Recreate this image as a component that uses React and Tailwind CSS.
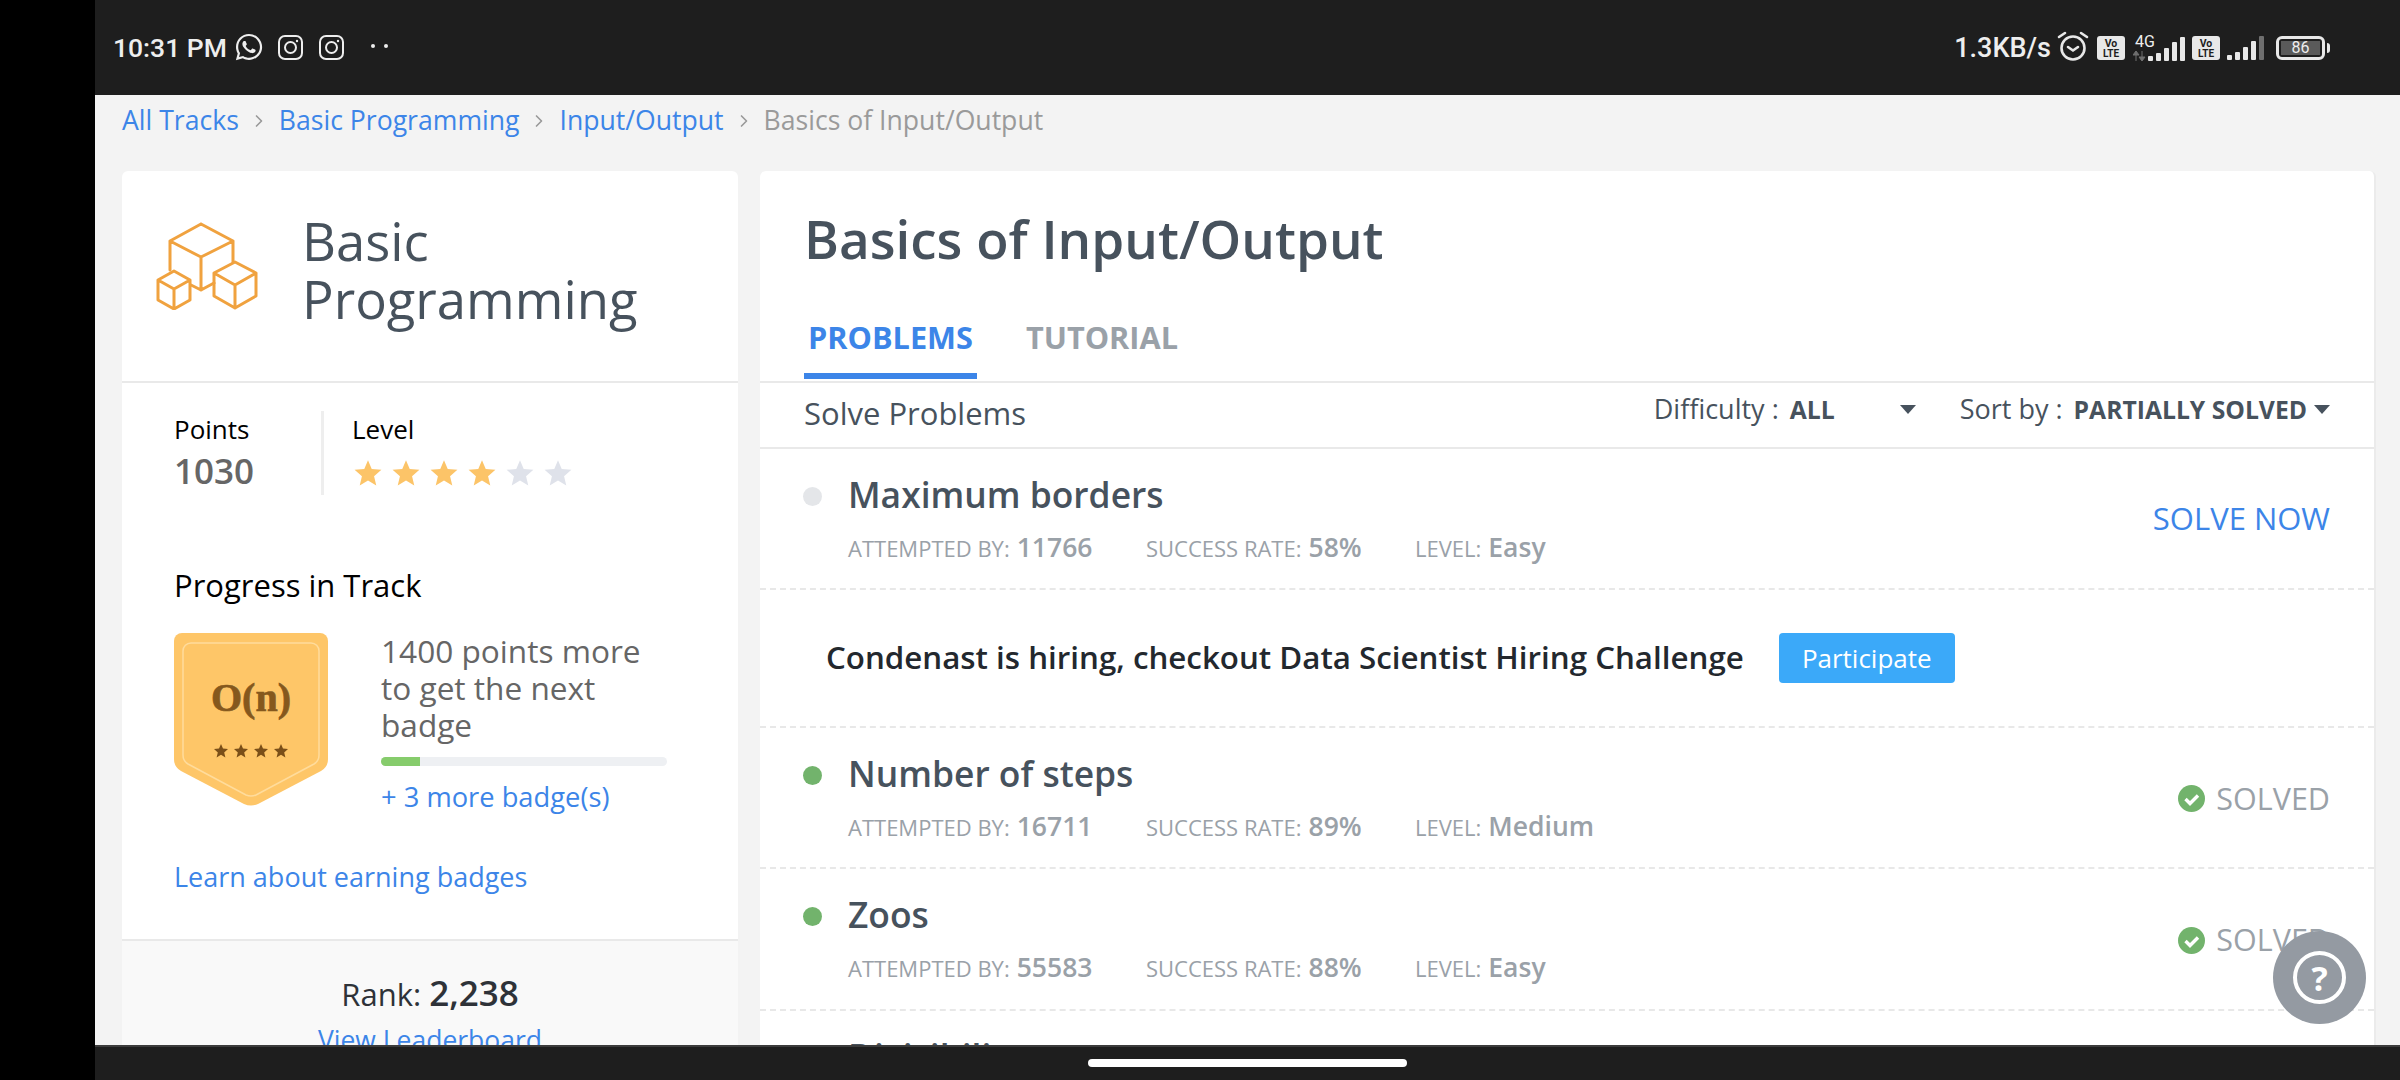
import React from "react";
import { FaWhatsapp } from "react-icons/fa";
import { ChevronRight } from "lucide-react";

function Insta() {
  return (
    <svg width="25" height="25" viewBox="0 0 25 25" fill="none" stroke="#eeeeee" strokeWidth="2">
      <rect x="1" y="1" width="23" height="23" rx="6" />
      <circle cx="12.5" cy="12.5" r="5.5" />
      <circle cx="19" cy="6" r="1.2" fill="#eeeeee" stroke="none" />
    </svg>
  );
}

function Volte() {
  return (
    <svg width="28" height="24" viewBox="0 0 28 24">
      <rect width="28" height="24" rx="3" fill="#e8e8e8" />
      <text x="14" y="11" textAnchor="middle" fontSize="10.5" fontWeight="700" fontFamily="Roboto, sans-serif" fill="#1e1e1e">Vo</text>
      <text x="14" y="21" textAnchor="middle" fontSize="10" fontWeight="700" fontFamily="Roboto, sans-serif" fill="#1e1e1e">LTE</text>
    </svg>
  );
}

function Signal({ dim }) {
  const bars = [5, 8, 13, 19, 24];
  return (
    <svg width="37" height="24" viewBox="0 0 37 24">
      {bars.map((h, i) => (
        <rect key={h} x={i * 8} y={24 - h} width="5" height={h} rx="1" fill={dim && i === 4 ? "#6f6f6f" : "#e8e8e8"} />
      ))}
    </svg>
  );
}

function StatusBar() {
  return (
    <div className="h-[95px] bg-[#1e1e1e] flex items-center justify-between pl-[18px] pr-[70px] font-['Roboto',sans-serif] text-[#eeeeee] shrink-0">
      <div className="flex items-center">
        <span className="text-[26.5px] font-medium w-[121px] mt-[1px]">10:31 PM</span>
        <FaWhatsapp className="text-[30px] mr-[14px] -mt-[2px]" />
        <Insta />
        <span className="w-4" />
        <Insta />
        <span className="ml-[27px] flex gap-[9px] -mt-[3px]">
          <span className="w-1 h-1 rounded-full bg-[#eeeeee]" />
          <span className="w-1 h-1 rounded-full bg-[#eeeeee]" />
        </span>
      </div>
      <div className="flex items-center">
        <span className="text-[27px] font-medium mr-[6px] mt-[1px]">1.3KB/s</span>
        <svg width="32" height="32" viewBox="0 0 32 32" fill="none" stroke="#e8e8e8" strokeWidth="2.6" className="mr-[8px] -mt-[4px]">
          <circle cx="16" cy="18" r="11.5" />
          <path d="M11 17l5 3.5 5-3.5" strokeLinecap="round" />
          <path d="M2 7l6-4M30 7l-6-4" strokeLinecap="round" />
        </svg>
        <Volte />
        <div className="relative w-[50px] ml-[10px] h-[26px] flex justify-end items-end">
          <span className="absolute left-0 -top-[1px] text-[16px] leading-none">4G</span>
          <svg width="13" height="10" viewBox="0 0 13 10" fill="#6f6f6f" className="absolute -left-[2px] bottom-0">
            <path d="M3 0v10M0 4l3-4 3 4zM9 0v10M6 6l3 4 3-4z" stroke="#6f6f6f" />
          </svg>
          <Signal />
        </div>
        <span className="w-[7px]" />
        <Volte />
        <span className="w-[7px]" />
        <Signal dim />
        <div className="ml-[12px] w-[49px] h-[24px] rounded-[6px] border-[3px] border-[#e8e8e8] flex items-center justify-center p-[2px]">
          <span className="w-full h-[14px] bg-[#5a5a5a] flex items-center justify-center text-[16px] leading-none">86</span>
        </div>
        <span className="ml-[2px] w-[3px] h-[10px] bg-[#e8e8e8] rounded-r" />
      </div>
    </div>
  );
}

function Crumb({ children }) {
  return <a className="text-[#3c85e8]">{children}</a>;
}

function Sep() {
  return <ChevronRight size={20} className="text-[#9a9a9a] mx-[10px] mt-[2px]" />;
}

function Star({ on }) {
  return (
    <svg width="28" height="28" viewBox="0 0 24 24" fill={on ? "#fcc468" : "#dfe2ea"}>
      <path d="M12 1l3.2 7.6 8.3.7-6.3 5.4 1.9 8.1L12 18.5l-7.1 4.3 1.9-8.1L.5 9.3l8.3-.7z" />
    </svg>
  );
}

function Cubes() {
  return (
    <svg width="102" height="88" viewBox="0 0 102 88" fill="none" stroke="#f0a23f" strokeWidth="3" strokeLinejoin="round" strokeLinecap="round">
      <path d="M45 2 14 19v29M45 2l32 17v21M14 19l31 16 32-16M45 35v33M35 63l10 5 13-7" />
      <path d="M79 40 58 51v23l21 12 21-12V51zM58 51l21 12 21-12M79 63v23" />
      <path d="M18 49 2 58v20l16 9 16-9V58zM2 58l16 9 16-9M18 67v20" />
    </svg>
  );
}

function BadgeStar({ x }) {
  return <path transform={`translate(${x} 111)`} d="M7 0l2 4.6 5 .5-3.8 3.3 1.2 5L7 10.8l-4.4 2.6 1.2-5L0 5.1l5-.5z" fill="#7a4f18" />;
}

function Badge() {
  return (
    <svg width="154" height="174" viewBox="0 0 154 174" className="shrink-0">
      <path d="M8 0h138a8 8 0 0 1 8 8v118q0 8-7 12L84 171q-7 3-14 0L7 138q-7-4-7-12V8a8 8 0 0 1 8-8z" fill="#fec668" />
      <path d="M17 10h120a8 8 0 0 1 8 8v104q0 6-5 9L82 162q-5 2-10 0L14 131q-5-3-5-9V18a8 8 0 0 1 8-8z" fill="none" stroke="#ffdc9c" strokeWidth="1.5" />
      <text x="77" y="78" textAnchor="middle" fontFamily="'Liberation Serif', serif" fontWeight="700" fontSize="40" fill="#85581d" stroke="#85581d" strokeWidth="0.7">O(n)</text>
      <BadgeStar x={40} />
      <BadgeStar x={60} />
      <BadgeStar x={80} />
      <BadgeStar x={100} />
    </svg>
  );
}

function LeftCard() {
  return (
    <div className="w-[616px] shrink-0 bg-white rounded-t-[6px] h-[1000px]">
      <div className="h-[212px] border-b-2 border-[#e9e9e9] flex pl-[34px]">
        <div className="pt-[51px] w-[146px]"><Cubes /></div>
        <h2 className="pt-[41px] text-[52.6px] leading-[58px] text-[#47525d] w-[400px]">Basic Programming</h2>
      </div>
      <div className="flex pl-[52px] pt-[28px]">
        <div className="w-[150px] border-r-[3px] border-[#eeeeee] h-[84px]">
          <div className="text-[26px] leading-[36px] text-black">Points</div>
          <div className="text-[35px] leading-[48px] font-semibold text-[#666666]">1030</div>
        </div>
        <div className="pl-[28px]">
          <div className="text-[26px] leading-[36px] text-black">Level</div>
          <div className="flex gap-[10px] mt-[12px] ml-[2px]">
            {[1, 2, 3, 4, 5, 6].map((n) => <Star key={n} on={n <= 4} />)}
          </div>
        </div>
      </div>
      <div className="pl-[52px] pr-[70px] pt-[70px]">
        <div className="text-[31px] leading-[40px] text-black">Progress in Track</div>
        <div className="flex mt-[28px]">
          <Badge />
          <div className="ml-[53px] flex-1 -mt-[1px]">
            <p className="text-[31.6px] leading-[37px] text-[#666666]">1400 points more to get the next badge</p>
            <div className="h-[9px] w-[286px] bg-[#eef0f3] rounded-full mt-[14px] overflow-hidden">
              <div className="h-full w-[39px] bg-[#86cc6c]" />
            </div>
            <a className="block text-[27.3px] leading-[36px] text-[#3c85e8] mt-[13px]">+ 3 more badge(s)</a>
          </div>
        </div>
        <a className="block text-[27px] leading-[36px] text-[#3c85e8] mt-[44px]">Learn about earning badges</a>
      </div>
      <div className="mt-[44px] border-t-2 border-[#e9e9e9] bg-[#f9f9f9] h-[200px] text-center pt-[31px]">
        <div className="text-[31px] leading-[42px] text-[#2e3238]">Rank: <span className="text-[35px] font-semibold">2,238</span></div>
        <a className="block text-[26.5px] leading-[36px] text-[#3c85e8] mt-[7px]">View Leaderboard</a>
      </div>
    </div>
  );
}

function CheckDot() {
  return (
    <svg width="27" height="27" viewBox="0 0 27 27">
      <circle cx="13.5" cy="13.5" r="13.5" fill="#72b36c" />
      <path d="M7.5 14l4.5 4.5 8-8" fill="none" stroke="#ffffff" strokeWidth="3.4" />
    </svg>
  );
}

function Stat({ label, value, width }) {
  return (
    <div style={{ width }} className="flex items-baseline">
      <span className="text-[22px] text-[#9aa1a8] uppercase">{label}:</span>
      <span className="text-[26.5px] font-semibold text-[#9aa1a8] ml-[7px]">{value}</span>
    </div>
  );
}

function ProblemRow({ title, attempted, rate, level, solved, tall }) {
  return (
    <div className={`${tall ? "h-[142px]" : "h-[141px]"} border-b-2 border-dashed border-[#e8e8e8] pl-[80px] pr-[44px] flex items-center justify-between shrink-0`}>
      <div className="self-start pt-[21px] relative">
        <span className={`absolute -left-[37px] top-[38px] w-[19px] h-[19px] rounded-full ${solved ? "bg-[#72b36c]" : "bg-[#e4e6e9]"}`} />
        <h3 className="text-[35.4px] leading-[48px] font-semibold text-[#47525d] ml-[8px]">{title}</h3>
        <div className="flex mt-[13px] h-[32px] ml-[8px] leading-[32px]">
          <Stat label="Attempted by" value={attempted} width={298} />
          <Stat label="Success rate" value={rate} width={269} />
          <Stat label="Level" value={level} width={200} />
        </div>
      </div>
      {solved ? (
        <div className="flex items-center gap-[11px] text-[30.5px] text-[#9aa1a8] mt-[2px]"><CheckDot />SOLVED</div>
      ) : (
        <a className="text-[31px] text-[#3c85e8]">SOLVE NOW</a>
      )}
    </div>
  );
}

function RightCard() {
  return (
    <div className="flex-1 bg-white border-r-2 border-[#ebebeb] rounded-t-[6px] h-[1000px] ">
      <div className="h-[212px] border-b-2 border-[#e9e9e9] pl-[44px]">
        <h1 className="pt-[34px] text-[53px] leading-[68px] font-semibold text-[#47525d]">Basics of Input/Output</h1>
        <div className="flex mt-[44px]">
          <div className="px-[4px] pb-[16px] border-b-[6px] border-[#3c85e8] text-[30.7px] leading-[40px] font-bold text-[#3c85e8]">PROBLEMS</div>
          <div className="ml-[49px] text-[30.7px] leading-[40px] font-bold text-[#9aa1a8]">TUTORIAL</div>
        </div>
      </div>
      <div className="h-[66px] border-b-2 border-[#e9e9e9] pl-[44px] pr-[44px] flex items-center justify-between">
        <span className="text-[31px] text-[#47525d] -mt-[3px]">Solve Problems</span>
        <div className="flex items-center text-[27px] text-[#47525d] -mt-[11px]">
          <span>Difficulty :</span>
          <span className="ml-[11px] font-bold text-[24.7px] w-[110px]">ALL</span>
          <span className="border-x-[8px] border-x-transparent border-t-[9px] border-t-[#47525d]" />
          <span className="ml-[44px]">Sort by :</span>
          <span className="ml-[11px] font-bold text-[24.7px]">PARTIALLY SOLVED</span>
          <span className="ml-[7px] border-x-[8px] border-x-transparent border-t-[9px] border-t-[#47525d]" />
        </div>
      </div>
      <ProblemRow title="Maximum borders" attempted="11766" rate="58%" level="Easy" />
      <div className="h-[138px] border-b-2 border-dashed border-[#e8e8e8] pl-[66px] flex items-center">
        <span className="text-[31.3px] font-semibold text-[#23282e] -mt-[2px]">Condenast is hiring, checkout Data Scientist Hiring Challenge</span>
        <button className="ml-[35px] h-[50px] w-[176px] bg-[#3ba9f9] rounded-[4px] text-white text-[26px]">Participate</button>
      </div>
      <ProblemRow title="Number of steps" attempted="16711" rate="89%" level="Medium" solved />
      <ProblemRow title="Zoos" attempted="55583" rate="88%" level="Easy" solved tall />
      <ProblemRow title="Divisibility" attempted="48211" rate="75%" level="Easy" solved />
    </div>
  );
}

export default function App() {
  return (
    <div className="h-screen w-full overflow-hidden bg-black flex font-['Open_Sans',sans-serif]">
      <div className="w-[95px] shrink-0" />
      <div className="flex-1 flex flex-col relative min-w-0">
        <StatusBar />
        <div className="flex-1 bg-[#f3f3f3] overflow-hidden pl-[27px] pr-[24px] min-h-0">
          <div className="h-[76px] pt-[5px] flex items-start text-[26.6px] leading-[40px]">
            <Crumb>All Tracks</Crumb>
            <span className="h-[40px] flex items-center"><Sep /></span>
            <Crumb>Basic Programming</Crumb>
            <span className="h-[40px] flex items-center"><Sep /></span>
            <Crumb>Input/Output</Crumb>
            <span className="h-[40px] flex items-center"><Sep /></span>
            <span className="text-[#9a9a9a]">Basics of Input/Output</span>
          </div>
          <div className="flex gap-[22px]">
            <LeftCard />
            <RightCard />
          </div>
        </div>
        <div className="h-[35px] shrink-0 bg-[#1e1e1e] border-t-2 border-[#3c3c3c] flex justify-center pt-[12px]">
          <div className="w-[319px] h-[8px] bg-white rounded-full" />
        </div>
        <button className="absolute right-[34px] bottom-[56px] w-[93px] h-[93px] rounded-full bg-[#949aa2] flex items-center justify-center">
          <span className="w-[53px] h-[53px] rounded-full border-[4px] border-white flex items-center justify-center text-white text-[34px] font-bold leading-none">?</span>
        </button>
      </div>
    </div>
  );
}
